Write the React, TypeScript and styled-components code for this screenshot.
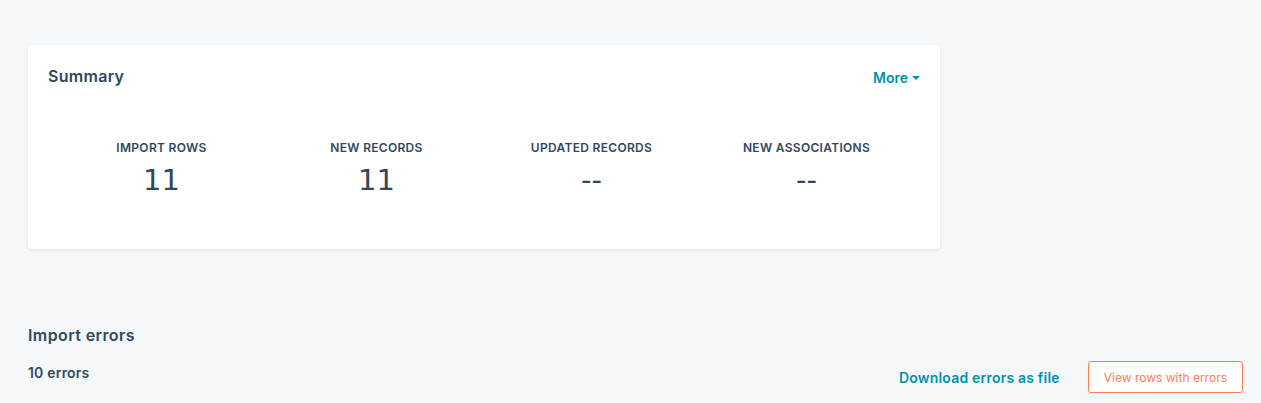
import React from 'react';
import styled, { createGlobalStyle } from 'styled-components';

const GlobalStyle = createGlobalStyle`
	html, body {
		margin: 0;
		padding: 0;
		background: #f5f8fa;
		font-family: Inter, "Noto Sans", sans-serif;
		color: #33475b;
	}
`;

const Page = styled.main`
	padding: 45px 18px 0 28px;
`;

const Card = styled.section`
	width: 912px;
	height: 204px;
	box-sizing: border-box;
	background: #fff;
	border-radius: 4px;
	box-shadow: 0 1px 3px rgba(45, 62, 80, 0.12);
	padding: 22px 20px 0 20px;
`;

const CardHeader = styled.div`
	display: flex;
	justify-content: space-between;
	align-items: flex-start;
`;

const CardTitle = styled.h2`
	margin: 0;
	font-size: 16px;
	font-weight: 600;
	line-height: 18px;
	letter-spacing: 0.3px;
`;

const MoreButton = styled.button`
	display: flex;
	align-items: center;
	gap: 4px;
	margin-top: 2px;
	padding: 0;
	border: 0;
	background: none;
	font-family: inherit;
	font-size: 14px;
	font-weight: 600;
	color: #0091ae;
	cursor: pointer;
	&::after {
		content: '';
		border-left: 4px solid transparent;
		border-right: 4px solid transparent;
		border-top: 4px solid #0091ae;
		margin-top: 1px;
	}
`;

const Stats = styled.div`
	display: grid;
	grid-template-columns: repeat(4, 215px);
	margin: 54px 0 0 6px;
`;

const Stat = styled.div`
	display: flex;
	flex-direction: column;
	align-items: center;
`;

const StatLabel = styled.span`
	font-size: 12px;
	font-weight: 600;
	letter-spacing: 0.3px;
	text-transform: uppercase;
	line-height: 16px;
`;

const StatValue = styled.span`
	margin-top: 8px;
	font-family: "DejaVu Sans", sans-serif;
	font-size: 29px;
	font-weight: 400;
	line-height: 32px;
`;

const Errors = styled.section`
	margin-top: 76px;
`;

const SectionTitle = styled.h3`
	margin: 0;
	font-size: 16px;
	font-weight: 600;
	line-height: 20px;
	letter-spacing: 0.4px;
`;

const ErrorsRow = styled.div`
	display: flex;
	align-items: center;
	justify-content: space-between;
	margin-top: 16px;
`;

const ErrorCount = styled.span`
	font-size: 14px;
	font-weight: 600;
	margin-top: -10px;
	letter-spacing: 0.2px;
`;

const Actions = styled.div`
	display: flex;
	align-items: center;
	gap: 28px;
`;

const TextLink = styled.a`
	font-size: 14px;
	font-weight: 600;
	letter-spacing: 0.2px;
	color: #0091ae;
	text-decoration: none;
	cursor: pointer;
`;

const OutlineButton = styled.button`
	height: 32px;
	padding: 0 15px;
	border: 1px solid #ff7a59;
	border-radius: 3px;
	background: #fff;
	font-family: inherit;
	font-size: 12px;
	color: #ff7a59;
	cursor: pointer;
`;

const stats = [
	{ label: 'Import rows', value: '11' },
	{ label: 'New records', value: '11' },
	{ label: 'Updated records', value: '--' },
	{ label: 'New associations', value: '--' },
];

export default function App() {
	return (
		<>
			<GlobalStyle />
			<Page>
				<Card>
					<CardHeader>
						<CardTitle>Summary</CardTitle>
						<MoreButton>More</MoreButton>
					</CardHeader>
					<Stats>
						{stats.map((s) => (
							<Stat key={s.label}>
								<StatLabel>{s.label}</StatLabel>
								<StatValue>{s.value}</StatValue>
							</Stat>
						))}
					</Stats>
				</Card>
				<Errors>
					<SectionTitle>Import errors</SectionTitle>
					<ErrorsRow>
						<ErrorCount>10 errors</ErrorCount>
						<Actions>
							<TextLink>Download errors as file</TextLink>
							<OutlineButton>View rows with errors</OutlineButton>
						</Actions>
					</ErrorsRow>
				</Errors>
			</Page>
		</>
	);
}
